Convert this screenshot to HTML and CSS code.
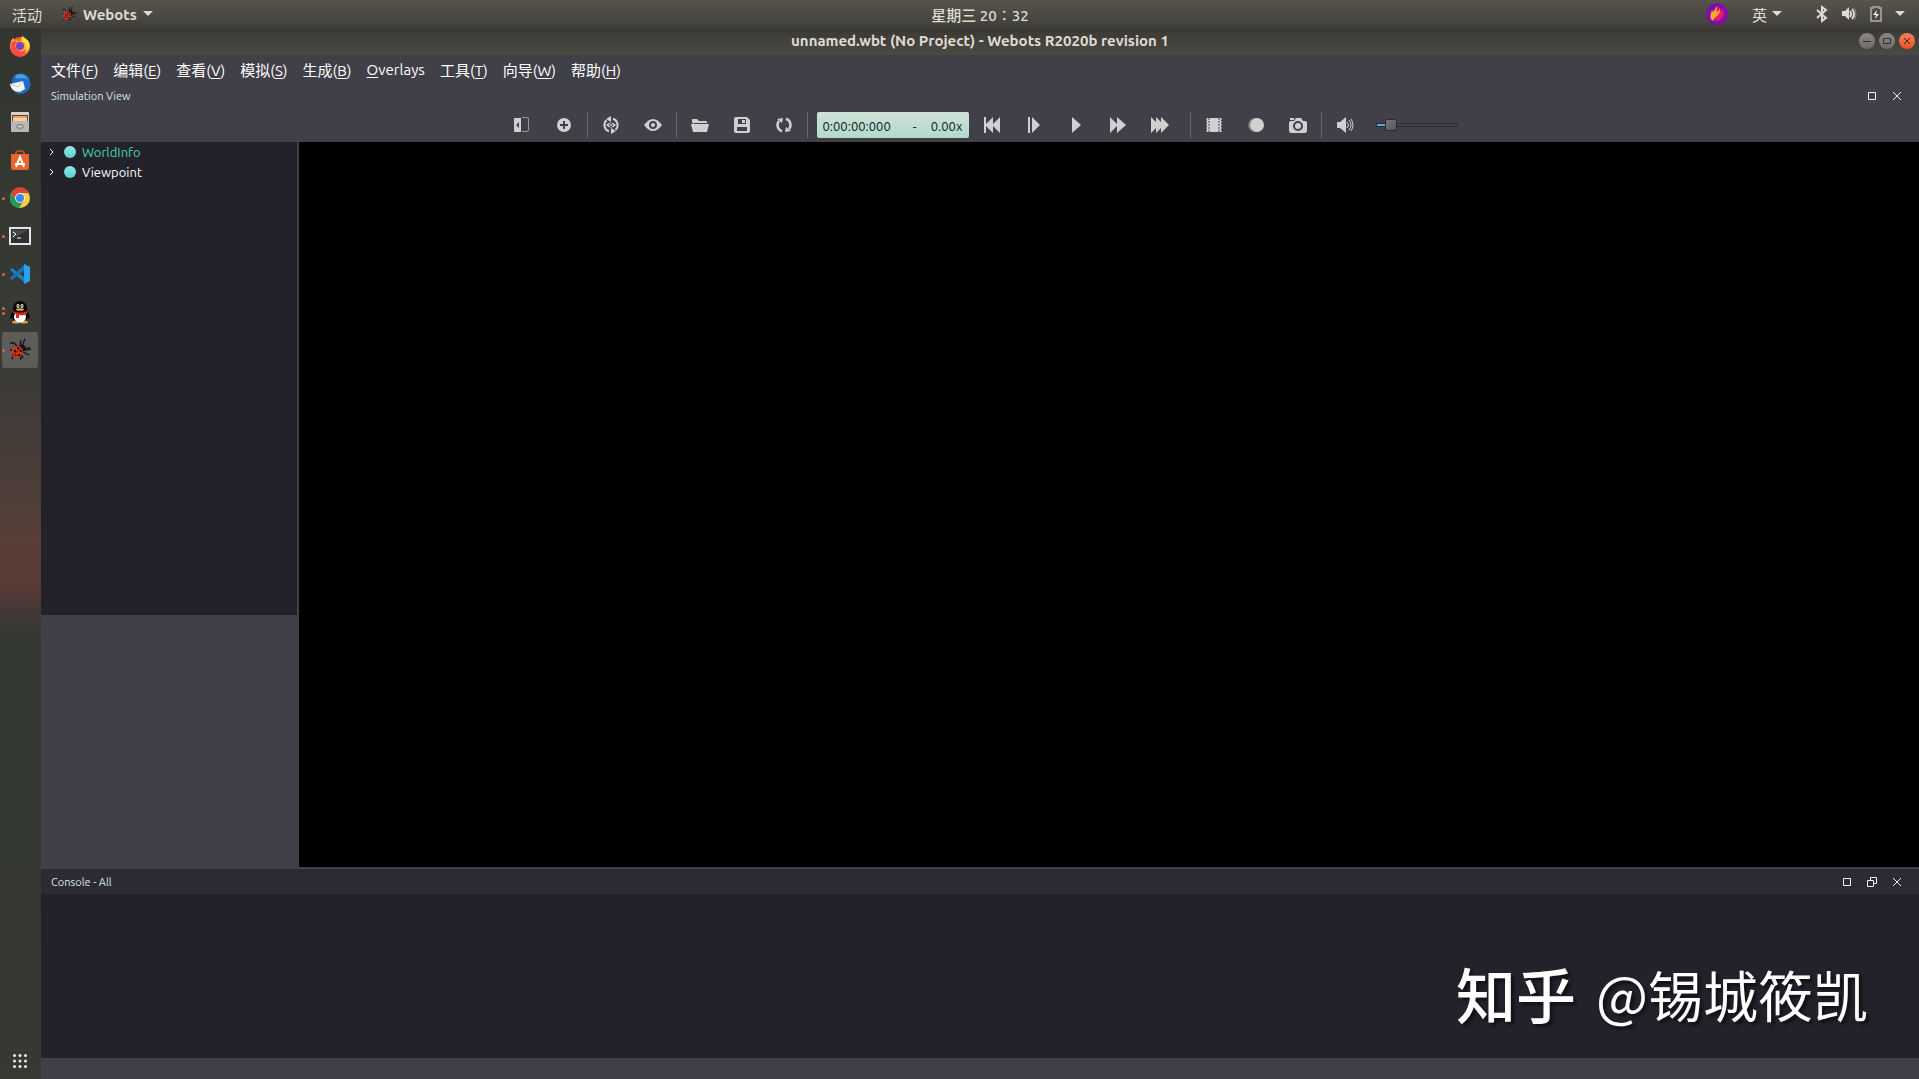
FILE: index.html
```html
<!DOCTYPE html>
<html lang="zh-CN">
<head>
    <meta charset="UTF-8">
    <meta name="viewport" content="width=device-width, initial-scale=1.0">
    <title>unnamed.wbt (No Project) - Webots R2020b revision 1</title>
    <link rel="stylesheet" href="styles.css">
</head>
<body>
    <!-- System bar -->
    <header class="topbar">
        <button class="activities">活动</button>
        <div class="topbar-left">
            <button class="app-menu">
                <svg width="16" height="16" viewBox="0 0 24 24"><use href="#bug"/></svg>
                Webots
                <svg width="10" height="6" viewBox="0 0 10 6"><path d="M0 0h10L5 5z" fill="#dfdbd2"/></svg>
            </button>
        </div>
        <button class="clock">星期三 20∶32</button>
        <div class="topbar-right">
            <svg class="flame" width="22" height="22" viewBox="0 0 22 22">
                <circle cx="11" cy="11" r="11" fill="#7d0fae"/>
                <path d="M9 18c6 0 9-5 9-8l-2-4-1 2-2-5-2 5-2 3z" fill="#ef1768"/>
                <path d="M7 18c-3-2-3-5-2-8l1-3 1 2 4-6c1 3-1 4 0 6l3-3c1 6-5 7-7 12z" fill="#ffa52c"/>
            </svg>
            <button class="input-method">英
                <svg width="10" height="6" viewBox="0 0 10 6"><path d="M0 0h10L5 5z" fill="#dfdbd2"/></svg>
            </button>
            <button class="system-menu" aria-label="系统菜单">
                <svg width="12" height="18" viewBox="0 0 12 18"><path d="M1 5l9 8-4 3V2l4 3-9 8" fill="none" stroke="#dfdbd2" stroke-width="2"/></svg>
                <svg width="16" height="16" viewBox="0 0 16 16"><path d="M1 5h3l4-4v13l-4-4H1z" fill="#dfdbd2"/><path d="M9 5q2 3 0 6M11 3q4 5 0 10" fill="none" stroke="#dfdbd2" stroke-width="2"/><path d="M13 2q4 6 0 12" fill="none" stroke="#88857d"/></svg>
                <svg width="12" height="16" viewBox="0 0 12 16"><path d="M3 2V1h6v1h2v13H1V2z" fill="none" stroke="#98958d" stroke-width="2"/><path d="M7 4L3 9h3l-1 4 4-5H6z" fill="#f2f0e8"/></svg>
                <svg width="10" height="6" viewBox="0 0 10 6"><path d="M0 0h10L5 5z" fill="#dfdbd2"/></svg>
            </button>
        </div>
    </header>

    <div class="desktop">
        <!-- Launcher -->
        <aside class="dock">
            <button class="dock-item" aria-label="Firefox">
                <svg width="22" height="22" viewBox="0 0 22 22">
                    <circle cx="11" cy="12" r="10" fill="#ff5a36"/>
                    <path d="M1 12C1 8 2 5 4 3l2 3c2-1 4 0 5 1l2-6c5 3 8 7 8 11-1 4-4 6-8 7C7 19 2 17 1 12z" fill="#ffb52e"/>
                    <path d="M2 8c2-3 5-2 7 0-2 0-3 1-3 3 2 5 7 7 11 3-1 5-4 8-8 7C4 21 0 14 2 8z" fill="#fb4a4b"/>
                    <path d="M13 1c1 3 0 5 3 7 2 3 2 6 1 8 4-4 5-9 0-12z" fill="#ffe145"/>
                    <circle cx="11" cy="11" r="4" fill="#7544c9"/>
                </svg>
            </button>
            <button class="dock-item" aria-label="Thunderbird">
                <svg width="22" height="22" viewBox="0 0 22 22">
                    <path d="M4 4C9-2 20 0 21 8c2 7-3 13-10 13C5 20 1 15 3 10z" fill="#236bc0"/>
                    <path d="M6 3c5-4 12-1 13 4-4-3-8-1-12-2z" fill="#4ba2e8"/>
                    <path d="M1 11l13-3 2 8-5 3c-6 0-9-3-10-8z" fill="#f4f5f7"/>
                    <path d="M1 11l8 3 5-6" fill="none" stroke="#b8c5d5"/>
                </svg>
            </button>
            <button class="dock-item" aria-label="文件">
                <svg width="20" height="20" viewBox="0 0 20 20">
                    <rect x="1" width="18" height="11" rx="1" fill="#d7d4cd"/>
                    <path d="M2 3h16v7H2z" fill="#55412f"/><path d="M3 4h14v5H3z" fill="#f1a253"/><path d="M3 6h14v3H3z" fill="#f4d2a8"/>
                    <rect x="1" y="9" width="18" height="11" rx="1" fill="#b8b7b3"/>
                    <rect x="7" y="13" width="6" height="3" rx="1" fill="#ddd" stroke="#666"/>
                </svg>
            </button>
            <button class="dock-item" aria-label="Ubuntu 软件">
                <svg width="20" height="20" viewBox="0 0 20 20">
                    <path d="M6 6V3q0-2 4-2t4 2v3" fill="none" stroke="#bb4b22" stroke-width="2"/>
                    <path d="M1 4h18v14q0 2-2 2H3q-2 0-2-2z" fill="#e9652f"/>
                    <path d="M6 17l4-10 4 10M5 14h10" fill="none" stroke="#fff" stroke-width="2"/>
                </svg>
            </button>
            <button class="dock-item running" aria-label="Chrome">
                <svg width="22" height="22" viewBox="0 0 22 22">
                    <circle cx="11" cy="11" r="10" fill="#ffcd42"/>
                    <path d="M2 6a10 10 0 0 1 18 0h-9l-4 7z" fill="#db4437"/>
                    <path d="M2 6a10 10 0 0 0 8 15l5-8-8 0z" fill="#209957"/>
                    <circle cx="11" cy="11" r="5" fill="#eee"/><circle cx="11" cy="11" r="4" fill="#4285f4"/>
                </svg>
            </button>
            <button class="dock-item running" aria-label="终端">
                <svg width="22" height="18" viewBox="0 0 22 18">
                    <path d="M1 1h20v16H1z" fill="#303030" stroke="#e5e5e5" stroke-width="2"/>
                    <path d="M3 3h16L3 12z" fill="#484848"/>
                    <path d="M4 5l3 2-3 3M8 11h4" fill="none" stroke="#fff" stroke-width="1"/>
                </svg>
            </button>
            <button class="dock-item running" aria-label="VS Code">
                <svg width="22" height="22" viewBox="0 0 22 22">
                    <path d="M1 7l2-2 13 10v5z" fill="#1683c7"/><path d="M1 15l2 2L16 7V1z" fill="#1573b4"/>
                    <path d="M15 1l6 3v14l-6 3z" fill="#2ba0ee"/>
                </svg>
            </button>
            <button class="dock-item running twice" aria-label="QQ">
                <svg width="20" height="23" viewBox="0 0 20 23">
                    <ellipse cx="10" cy="14" rx="8" ry="8" fill="#080808"/><path d="M3 11c-3 2-3 6-2 7l4-5M17 11c3 2 3 6 2 7l-4-5" fill="#080808"/>
                    <ellipse cx="6" cy="21" rx="4" ry="1.5" fill="#d99c36"/><ellipse cx="14" cy="21" rx="4" ry="1.5" fill="#d99c36"/>
                    <ellipse cx="10" cy="16" rx="6" ry="5.5" fill="#fff"/>
                    <ellipse cx="10" cy="7" rx="7" ry="7" fill="#080808"/>
                    <ellipse cx="8" cy="5" rx="1.5" ry="2" fill="#eee"/><ellipse cx="12" cy="5" rx="1.5" ry="2" fill="#eee"/>
                    <circle cx="8" cy="5" r=".7"/><circle cx="12" cy="5" r=".7"/>
                    <ellipse cx="10" cy="8.5" rx="4" ry="1.3" fill="#e8a32b"/>
                    <path d="M3 10q7 3 14 0v3q-4 2-8 1v3H6v-4l-3-1z" fill="#d8232a"/>
                </svg>
            </button>
            <button class="dock-item running active" aria-label="Webots">
                <svg width="24" height="24" viewBox="0 0 24 24">
                    <g id="bug">
                        <path d="M12 8l1-6M14 8l3-7M16 11l6-2M16 12l7-1M15 14l6 3M9 8L6 5 2 5M5 12H2M7 17l-3 3 1 1M13 16l2 4M12 17l1 5" fill="none" stroke="#15110f" stroke-width="1.3"/>
                        <circle cx="14" cy="10" r="3.5" fill="#111"/>
                        <ellipse cx="9" cy="14" rx="5.5" ry="6.5" transform="rotate(40 9 14)" fill="#d03420"/>
                        <path d="M14 9L4 18" stroke="#4b0d07"/>
                        <path d="M6 12h2v2H6zM10 16h2v2h-2zM7 17h2v1H7zM9 9h2v2H9zM12 12h2v2h-2z" fill="#16100e"/>
                    </g>
                </svg>
            </button>
            <button class="dock-item show-apps" aria-label="显示应用程序">
                <svg width="14" height="14" viewBox="0 0 14 14" fill="#eee">
                    <circle cx="1.5" cy="1.5" r="1.5"/><circle cx="7" cy="1.5" r="1.5"/><circle cx="12.5" cy="1.5" r="1.5"/>
                    <circle cx="1.5" cy="7" r="1.5"/><circle cx="7" cy="7" r="1.5"/><circle cx="12.5" cy="7" r="1.5"/>
                    <circle cx="1.5" cy="12.5" r="1.5"/><circle cx="7" cy="12.5" r="1.5"/><circle cx="12.5" cy="12.5" r="1.5"/>
                </svg>
            </button>
        </aside>

        <!-- Webots window -->
        <main class="window">
            <div class="titlebar">
                <h1>unnamed.wbt (No Project) - Webots R2020b revision 1</h1>
                <div class="window-buttons">
                    <button aria-label="最小化"><svg width="10" height="10" viewBox="0 0 10 10"><path d="M1 5.5h8" stroke="#33322e"/></svg></button>
                    <button aria-label="最大化"><svg width="10" height="10" viewBox="0 0 10 10"><path d="M1.5 2.5h7v5h-7z" fill="none" stroke="#33322e"/></svg></button>
                    <button class="close" aria-label="关闭"><svg width="10" height="10" viewBox="0 0 10 10"><path d="M2 2l6 6M8 2L2 8" stroke="#4b2114"/></svg></button>
                </div>
            </div>

            <nav class="menubar">
                <button>文件(<u>F</u>)</button>
                <button>编辑(<u>E</u>)</button>
                <button>查看(<u>V</u>)</button>
                <button>模拟(<u>S</u>)</button>
                <button>生成(<u>B</u>)</button>
                <button><u>O</u>verlays</button>
                <button>工具(<u>T</u>)</button>
                <button>向导(<u>W</u>)</button>
                <button>帮助(<u>H</u>)</button>
            </nav>

            <div class="panel-title">
                <h2>Simulation View</h2>
                <button aria-label="Maximize"><svg width="10" height="10" viewBox="0 0 10 10"><path d="M1.5 1.5h7v7h-7z"/></svg></button>
                <button aria-label="Close"><svg width="10" height="10" viewBox="0 0 10 10"><path d="M1 1l8 8M9 1L1 9"/></svg></button>
            </div>

            <div class="toolbar">
                <button class="tool" aria-label="Hide scene tree"><svg width="18" height="18" viewBox="0 0 18 18"><path d="M2 2h6v14H2q-1 0-1-1V3q0-1 1-1zM6 6L3 9l3 3z" fill-rule="evenodd"/><path d="M9 1.5h5q1.5 0 1.5 1.5v11q0 1.5-1.5 1.5H9" fill="none" stroke="#97969c"/></svg></button>
                <button class="tool" aria-label="Add node"><svg width="18" height="18" viewBox="0 0 18 18"><circle cx="9" cy="9" r="7"/><path d="M9 5v8M5 9h8" stroke="#414049" stroke-width="2"/></svg></button>
                <span class="separator"></span>
                <button class="tool" aria-label="Restore viewpoint"><svg width="18" height="18" viewBox="0 0 18 18"><path d="M7 15.3A6.5 6.5 0 0 1 4.500 4.300M11 2.700a6.500 6.500 0 0 1 2.500 11" fill="none" stroke="#d0cfd2" stroke-width="2"/><path d="M4 3l5-3v6zM14 15l-5 3v-6zM4 9q5-5 10 0-5 5-10 0z"/><circle cx="9" cy="9" r="1.5" fill="none" stroke="#414049"/></svg></button>
                <button class="tool" aria-label="View"><svg width="18" height="18" viewBox="0 0 18 18"><path d="M0 9q9-12 18 0-9 12-18 0z"/><circle cx="9" cy="9" r="3" fill="none" stroke="#414049" stroke-width="2"/></svg></button>
                <span class="separator"></span>
                <button class="tool" aria-label="Open world"><svg width="18" height="18" viewBox="0 0 18 18"><path d="M1 6V4q0-1 1-1h4l2 2h7q1 0 1 1v1H3L2 8zM0 8h18l-2 8H2z"/></svg></button>
                <button class="tool" aria-label="Save world"><svg width="18" height="18" viewBox="0 0 18 18"><path d="M3 1h11l3 3v11q0 2-2 2H3q-2 0-2-2V3q0-2 2-2zM5 3v5h8V3zM9 4h3v3H9zM4 11v4h10v-4z" fill-rule="evenodd"/></svg></button>
                <button class="tool" aria-label="Reload world"><svg width="18" height="18" viewBox="0 0 18 18"><path d="M7 15.2A6.400 6.400 0 0 1 4 5M11 2.800A6.400 6.400 0 0 1 14 13" fill="none" stroke="#d0cfd2" stroke-width="2.5"/><path d="M2 3l6-1-1 5zM16 15l-6 1 1-5z"/></svg></button>
                <span class="separator"></span>
                <div class="lcd"><span>0:00:00:000</span><span class="dash">-</span><span>0.00x</span></div>
                <button class="tool" aria-label="Reset simulation"><svg width="18" height="18" viewBox="0 0 18 18"><path d="M1 1h2v7l7-7v7l7-7v16l-7-7v7l-7-7v7H1z"/></svg></button>
                <button class="tool" aria-label="Step"><svg width="18" height="18" viewBox="0 0 18 18"><path d="M3 1h2v16H3zM7 1l8 8-8 8z"/></svg></button>
                <button class="tool" aria-label="Run real-time"><svg width="18" height="18" viewBox="0 0 18 18"><path d="M5 1l9 8-9 8z"/></svg></button>
                <button class="tool" aria-label="Run"><svg width="18" height="18" viewBox="0 0 18 18"><path d="M1 1l7 7V1l9 8-9 8v-7l-7 7z"/></svg></button>
                <button class="tool" aria-label="Fast"><svg width="18" height="18" viewBox="0 0 18 18"><path d="M0 1l5 5V1l5 5V1l8 8-8 8v-5l-5 5v-5l-5 5z"/></svg></button>
                <span class="separator wide"></span>
                <button class="tool" aria-label="Make movie"><svg width="18" height="18" viewBox="0 0 18 18"><path d="M2 2h14v14H2z"/><path d="M4 2v14M14 2v14" stroke="#414049" stroke-dasharray="2 1"/><path d="M1 3h2M1 6h2M1 9h2M1 12h2M1 15h2M15 3h2M15 6h2M15 9h2M15 12h2M15 15h2" stroke="#d0cfd2"/></svg></button>
                <button class="tool" aria-label="Record animation"><svg width="18" height="18" viewBox="0 0 18 18"><circle cx="8" cy="9" r="7" fill="#75747b"/><circle cx="10" cy="9" r="7"/></svg></button>
                <button class="tool" aria-label="Screenshot"><svg width="18" height="18" viewBox="0 0 18 18"><path d="M2 5h3l2-3h5l2 3h2q2 0 2 2v7q0 3-2 3H2q-2 0-2-3V7q0-2 2-2zM1 2h4v2H1z"/><circle cx="9" cy="10" r="4" fill="none" stroke="#414049" stroke-width="2"/></svg></button>
                <span class="separator"></span>
                <button class="tool" aria-label="Mute"><svg width="18" height="18" viewBox="0 0 18 18"><path d="M1 6h3l6-5v16l-6-5H1z"/><path d="M11 6q3 3 0 6M13 4q4 5 0 10M15 3q4 6 0 12" fill="none" stroke="#d0cfd2"/></svg></button>
                <input class="volume" type="range" min="0" max="100" value="12" aria-label="Volume">
            </div>

            <div class="workspace">
                <div class="side">
                    <ul class="tree">
                        <li class="modified"><svg width="6" height="8" viewBox="0 0 6 8"><path d="M1 1l3 3-3 3"/></svg><i class="node"></i>WorldInfo</li>
                        <li><svg width="6" height="8" viewBox="0 0 6 8"><path d="M1 1l3 3-3 3"/></svg><i class="node"></i>Viewpoint</li>
                    </ul>
                    <div class="field-editor"></div>
                </div>
                <div class="view3d"></div>
            </div>

            <section class="console">
                <div class="panel-title">
                    <h2>Console - All</h2>
                    <button aria-label="Maximize"><svg width="10" height="10" viewBox="0 0 10 10"><path d="M1.5 1.5h7v7h-7z"/></svg></button>
                    <button aria-label="Float"><svg width="10" height="10" viewBox="0 0 10 10"><path d="M.5 3.5h6v6h-6zM3.5 3V.5h6v6H7"/></svg></button>
                    <button aria-label="Close"><svg width="10" height="10" viewBox="0 0 10 10"><path d="M1 1l8 8M9 1L1 9"/></svg></button>
                </div>
                <div class="console-output"></div>
            </section>
            <footer class="statusbar"></footer>
        </main>
    </div>

    <div class="watermark"><b>知乎</b><span>@锡城筱凯</span></div>
</body>
</html>
```

FILE: styles.css
```css
* {
    margin: 0;
    padding: 0;
    box-sizing: border-box;
}

body {
    height: 100vh;
    display: flex;
    flex-direction: column;
    overflow: hidden;
    background: #414049;
    color: #fff;
    font-family: Ubuntu, 'Noto Sans', 'Noto Sans CJK SC', sans-serif;
    font-size: 15px;
}

button {
    border: none;
    background: none;
    color: inherit;
    font: inherit;
    white-space: nowrap;
}

svg {
    display: block;
    flex-shrink: 0;
}

/* system bar */
.topbar {
    display: grid;
    grid-template-columns: 41px 1fr auto 1fr;
    align-items: center;
    height: 28px;
    background: linear-gradient(#57544b, #403f3a);
    color: #dfdbd2;
}

.topbar button {
    display: flex;
    align-items: center;
}

.activities {
    padding-left: 12px;
}

.topbar-left {
    padding-left: 20px;
}

.app-menu {
    gap: 6px;
    font-weight: 700;
}

.clock {
    font-weight: 500;
}

.topbar-right {
    display: flex;
    justify-content: flex-end;
    align-items: center;
    padding-right: 14px;
}

.input-method {
    gap: 5px;
    margin: 0 34px 0 24px;
}

.system-menu {
    gap: 13px;
}

.desktop {
    flex: 1;
    display: flex;
    min-height: 0;
}

/* launcher */
.dock {
    width: 41px;
    display: flex;
    flex-direction: column;
    align-items: center;
    gap: 2px;
    padding-right: 2px;
    background: linear-gradient(#333530, #383a34 30%, #423c38 37%, #4d3f39 44%, #5b3e38 49%, #5a3b36 53%, #3d3935 56%, #343832 58%, #343832 75%, #383931);
}

.dock-item {
    position: relative;
    display: flex;
    justify-content: center;
    align-items: center;
    width: 36px;
    height: 36px;
    border-radius: 3px;
}

.dock-item.active {
    background: #5e5c59;
}

.dock-item.running::before {
    content: "";
    position: absolute;
    left: 0;
    width: 3px;
    height: 3px;
    border-radius: 50%;
    background: #d9674c;
}

.dock-item.twice::before {
    top: 13px;
    box-shadow: 0 5px #d9674c;
}

.show-apps {
    margin-top: auto;
}

/* window frame */
.window {
    flex: 1;
    display: flex;
    flex-direction: column;
    min-width: 0;
}

.titlebar {
    position: relative;
    display: flex;
    justify-content: center;
    align-items: center;
    height: 27px;
    padding-bottom: 2px;
    background: linear-gradient(#393834, #4b4a43);
    color: #dfdbd2;
}

.titlebar h1 {
    font-size: 15px;
    font-weight: 700;
}

.window-buttons {
    position: absolute;
    right: 4px;
    display: flex;
    gap: 4px;
}

.window-buttons button {
    display: flex;
    justify-content: center;
    align-items: center;
    width: 16px;
    height: 16px;
    border-radius: 50%;
    background: linear-gradient(#8b8982, #6c6a64);
}

.window-buttons .close {
    background: linear-gradient(#f5805a, #e65528);
}

.menubar {
    display: flex;
    align-items: center;
    gap: 15px;
    height: 31px;
    padding: 0 10px 2px;
}

.menubar u {
    text-decoration-thickness: 1px;
    text-underline-offset: 2px;
}

.panel-title {
    display: flex;
    align-items: center;
    gap: 15px;
    height: 19px;
    padding: 0 17px 0 10px;
}

.panel-title h2 {
    flex: 1;
    color: #d7e6ec;
    font-size: 11px;
    font-weight: 400;
}

.panel-title path {
    fill: none;
    stroke: #e8f2f6;
}

/* toolbar */
.toolbar {
    display: flex;
    justify-content: center;
    align-items: center;
    height: 37px;
    padding: 3px 2px 0 0;
}

.tool {
    display: flex;
    justify-content: center;
    width: 42px;
}

.tool svg {
    fill: #d0cfd2;
}

.separator {
    width: 1px;
    height: 26px;
    margin: 0 2px;
    background: #66656d;
}

.separator.wide {
    margin-left: 9px;
}

.lcd {
    display: flex;
    align-items: center;
    width: 152px;
    height: 26px;
    margin: 0 2px 0 7px;
    padding: 2px 6px 0;
    border-radius: 2px;
    background: linear-gradient(#d0e1d9, #b1dacd);
    color: #101816;
    font-size: 13px;
}

.lcd .dash {
    flex: 1;
    padding-left: 8px;
    text-align: center;
}

.volume {
    appearance: none;
    width: 82px;
    height: 12px;
    margin-left: 10px;
    background: none;
}

.volume::-webkit-slider-runnable-track {
    height: 4px;
    border: 1px solid #2b2a31;
    background: linear-gradient(90deg, #4fa8dc 10px, #45444d 10px);
}

.volume::-webkit-slider-thumb {
    appearance: none;
    width: 12px;
    height: 12px;
    margin-top: -5px;
    border: 1px solid #2b2a31;
    border-radius: 2px;
    background: linear-gradient(135deg, #77767c, #55545a);
}

/* scene tree and 3D view */
.workspace {
    flex: 1;
    display: flex;
    min-height: 0;
}

.side {
    width: 256px;
    margin-right: 2px;
    display: flex;
    flex-direction: column;
}

.tree {
    flex: 473;
    background: #23222b;
    list-style: none;
    font-size: 13px;
}

.tree li {
    display: flex;
    align-items: center;
    height: 20px;
    padding-left: 8px;
}

.tree path {
    fill: none;
    stroke: #fff;
}

.tree .modified {
    color: #41d5a8;
}

.node {
    width: 12px;
    height: 12px;
    margin: 0 6px 0 9px;
    border-radius: 50%;
    background: linear-gradient(#91ebe6, #5bd0cf);
}

.field-editor {
    flex: 252;
}

.view3d {
    flex: 1;
    background: #000;
}

/* console */
.console {
    margin-top: 2px;
}

.console .panel-title {
    height: 25px;
    background: #2c2b33;
}

.console-output {
    height: 164px;
    background: #23222b;
}

.statusbar {
    height: 21px;
}

.watermark {
    position: absolute;
    right: 51px;
    bottom: 46px;
    display: flex;
    gap: 20px;
    font-family: 'Noto Sans CJK SC', sans-serif;
    font-size: 55px;
    line-height: 80px;
    text-shadow: 3px 3px 3px #111117;
}

.watermark b {
    font-size: 60px;
    font-weight: 500;
}
```
